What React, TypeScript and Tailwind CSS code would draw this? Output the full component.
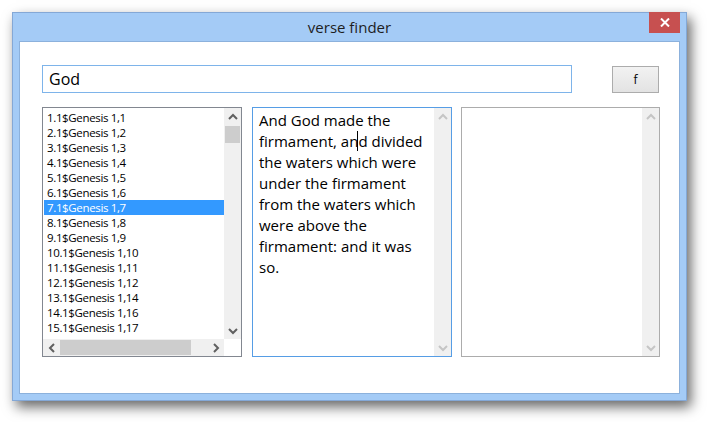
import React from 'react'

const VERSES = [
  '1.1$Genesis 1,1',
  '2.1$Genesis 1,2',
  '3.1$Genesis 1,3',
  '4.1$Genesis 1,4',
  '5.1$Genesis 1,5',
  '6.1$Genesis 1,6',
  '7.1$Genesis 1,7',
  '8.1$Genesis 1,8',
  '9.1$Genesis 1,9',
  '10.1$Genesis 1,10',
  '11.1$Genesis 1,11',
  '12.1$Genesis 1,12',
  '13.1$Genesis 1,14',
  '14.1$Genesis 1,16',
  '15.1$Genesis 1,17',
  '16.1$Genesis 1,18',
]

const LINES = [
  'And God made the',
  'firmament, and divided',
  'the waters which were',
  'under the firmament',
  'from the waters which',
  'were above the',
  'firmament: and it was',
  'so.',
]

type Dir = 'up' | 'down' | 'left' | 'right'

function Chevron({ dir, disabled }: { dir: Dir; disabled?: boolean }) {
  const pts = {
    up: '1,6 5,2 9,6',
    down: '1,2 5,6 9,2',
    left: '6,1 2,5 6,9',
    right: '2,1 6,5 2,9',
  }[dir]
  const vertical = dir === 'up' || dir === 'down'
  return (
    <svg
      width={vertical ? 10 : 8}
      height={vertical ? 8 : 10}
      viewBox={vertical ? '0 0 10 8' : '0 0 8 10'}
    >
      <polyline
        points={pts}
        fill="none"
        stroke={disabled ? '#c5c5c5' : '#606060'}
        strokeWidth="2"
      />
    </svg>
  )
}

function VScroll({ disabled, thumb }: { disabled?: boolean; thumb?: boolean }) {
  return (
    <div className="w-[17px] h-full bg-[#f0f0f0] flex flex-col shrink-0">
      <div className="h-[17px] flex items-center justify-center">
        <Chevron dir="up" disabled={disabled} />
      </div>
      <div className="flex-1 px-px">
        {thumb && <div className="h-[17px] mt-px bg-[#cdcdcd]" />}
      </div>
      <div className="h-[17px] flex items-center justify-center">
        <Chevron dir="down" disabled={disabled} />
      </div>
    </div>
  )
}

export default function App() {
  return (
    <div
      className="min-h-screen bg-white pt-3 pl-3"
      style={{ fontFamily: '"Open Sans", "Noto Sans", sans-serif' }}
    >
      <div className="relative w-[675px] h-[389px] bg-[#a4cbf6] border border-[#84a8d6] shadow-[4px_6px_12px_rgba(0,0,0,0.6)] flex flex-col">
        {/* Title bar */}
        <div className="h-[28px] flex items-center justify-center text-[15px] text-[#1e1e1e]">
          verse finder
        </div>
        <div className="absolute -top-px right-[6px] w-[31px] h-[21px] bg-[#c75050] flex items-center justify-center">
          <svg width="10" height="9" viewBox="0 0 10 9">
            <path d="M1 0.5 L9 8.5 M9 0.5 L1 8.5" stroke="#ffffff" strokeWidth="2" />
          </svg>
        </div>

        {/* Client area */}
        <div className="mx-[6px] mb-[6px] flex-1 bg-white border border-[#8cb1dc] pl-[22px] pr-[19px] pt-[23px] flex flex-col">
          <div className="flex items-start gap-[40px]">
            <div className="w-[530px] h-[28px] border border-[#7eb4ea] flex items-center pl-[6px] text-[16px] text-black">
              God
            </div>
            <button className="mt-px w-[47px] h-[27px] border border-[#acacac] bg-gradient-to-b from-[#f2f2f2] to-[#e3e3e3] flex items-center justify-center text-[12px] text-black">
              f
            </button>
          </div>

          <div className="flex mt-[14px] h-[250px]">
            {/* Verse list */}
            <div className="w-[200px] h-full border border-[#828790] flex flex-col">
              <div className="flex flex-1 min-h-0">
                <div className="flex-1 overflow-hidden pt-[2px] pl-px">
                  {VERSES.map((v, i) => (
                    <div
                      key={v}
                      className={
                        i === 6
                          ? 'h-[15px] leading-[15px] pl-[3px] text-[11.5px] tracking-[-0.35px] whitespace-nowrap bg-[#3399ff] text-white'
                          : 'h-[15px] leading-[15px] pl-[3px] text-[11.5px] tracking-[-0.35px] whitespace-nowrap text-black'
                      }
                    >
                      {v}
                    </div>
                  ))}
                </div>
                <VScroll thumb />
              </div>
              <div className="h-[17px] flex shrink-0">
                <div className="flex-1 bg-[#f0f0f0] flex items-center">
                  <div className="w-[17px] h-full flex items-center justify-center">
                    <Chevron dir="left" />
                  </div>
                  <div className="flex-1 h-full py-px">
                    <div className="w-[131px] h-full bg-[#cdcdcd]" />
                  </div>
                  <div className="w-[17px] h-full flex items-center justify-center">
                    <Chevron dir="right" />
                  </div>
                </div>
                <div className="w-[17px] bg-white" />
              </div>
            </div>

            {/* Verse text */}
            <div className="ml-[10px] w-[200px] h-full border border-[#569de5] flex">
              <div className="flex-1 pl-[6px] pt-[2px] text-[15px] leading-[21px] text-black whitespace-nowrap">
                {LINES.map((l, i) =>
                  i === 1 ? (
                    <div key={i}>
                      firmament,{' '}
                      <span className="relative">
                        an
                        <span className="absolute right-0 top-0 w-px h-full bg-black" />
                      </span>
                      d divided
                    </div>
                  ) : (
                    <div key={i}>{l}</div>
                  )
                )}
              </div>
              <VScroll disabled />
            </div>

            {/* Results */}
            <div className="ml-[9px] w-[199px] h-full border border-[#acacac] flex justify-end">
              <VScroll disabled />
            </div>
          </div>
        </div>
      </div>
    </div>
  )
}
